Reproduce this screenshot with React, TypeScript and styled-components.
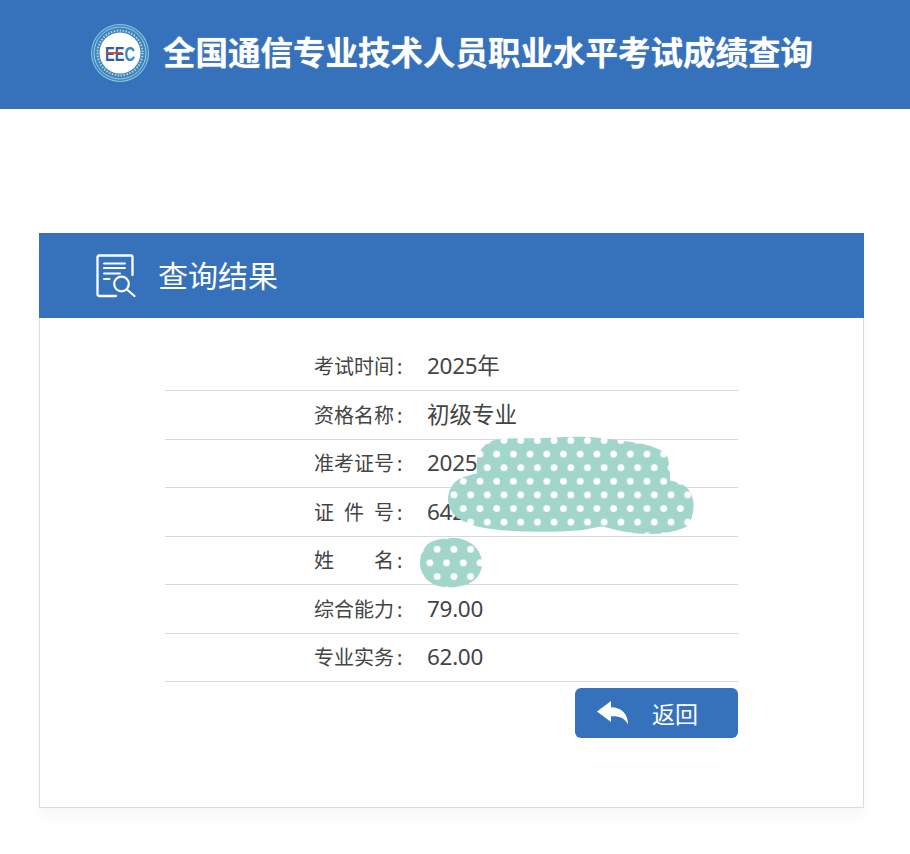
import React from "react";
import styled, { createGlobalStyle } from "styled-components";

const BLUE = "#3672bc";
const FONT = `"Noto Sans", "Noto Sans CJK SC", sans-serif`;

const Global = createGlobalStyle`
  html, body { margin: 0; padding: 0; background: #fff; }
  body { font-family: ${FONT}; color: #444; }
`;

const Page = styled.div`
  position: relative;
  width: 910px;
  height: 854px;
  overflow: hidden;
`;

const TopBar = styled.header`
  height: 109px;
  background: ${BLUE};
  display: flex;
  align-items: center;
  padding-left: 91px;
  gap: 14px;
  box-sizing: border-box;
  padding-bottom: 3px;
`;

const SiteTitle = styled.h1`
  margin: 0;
  font-size: 32.5px;
  line-height: 44px;
  font-weight: 700;
  color: #fff;
  white-space: nowrap;
  text-shadow: 0 0 1px rgba(255, 255, 255, 0.7);
`;

const Card = styled.section`
  width: 825px;
  height: 575px;
  margin: 124px 0 0 39px;
  box-sizing: border-box;
  background: #fff;
  border: 1px solid #dcdcdc;
  border-top: 0;
  box-shadow: 0 10px 12px rgba(0, 0, 0, 0.03);
`;

const CardHead = styled.div`
  height: 85px;
  margin: 0 -1px;
  background: ${BLUE};
  display: flex;
  align-items: center;
  padding-left: 57px;
  gap: 22px;
  color: #fff;
`;

const CardTitle = styled.h2`
  margin: 0;
  font-size: 30px;
  line-height: 40px;
  font-weight: 400;
`;

const Rows = styled.div`
  width: 573px;
  margin: 24.5px 0 0 125px;
`;

const Row = styled.div`
  height: 48.5px;
  box-sizing: border-box;
  border-bottom: 1px solid #d9d9d9;
  display: flex;
  align-items: center;
  padding-left: 149px;
`;

const Label = styled.span<{ $gap?: number }>`
  width: 113px;
  flex: none;
  padding-top: 2px;
  box-sizing: border-box;
  font-size: 20px;
  line-height: 46px;
  white-space: pre;
  color: #444;
  word-spacing: ${(p) => p.$gap ?? 0}px;
`;

const Colon = styled.span`
  margin-left: 3px;
`;

const Value = styled.span`
  font-size: 22.5px;
  line-height: 48px;
  color: #444;
  white-space: nowrap;
`;

const Digits = styled.span`
  letter-spacing: -0.3px;
`;

const Actions = styled.div`
  display: flex;
  justify-content: flex-end;
  margin-top: 6px;
`;

const BackButton = styled.button`
  width: 163px;
  height: 50px;
  border: 0;
  border-radius: 6px;
  background: ${BLUE};
  color: #fff;
  font-family: ${FONT};
  font-size: 23px;
  display: flex;
  align-items: center;
  padding: 0 0 0 22px;
  gap: 24px;
`;

const Scribble = styled.svg`
  position: absolute;
  left: 0;
  top: 0;
  pointer-events: none;
`;

const Logo = () => (
  <svg width="58" height="58" viewBox="0 0 58 58">
    <defs>
      <linearGradient id="eecFill" gradientUnits="userSpaceOnUse" x1="14" y1="0" x2="44" y2="0">
        <stop offset="0.62" stopColor="#2e5f9e" />
        <stop offset="0.68" stopColor="#2f8bb8" />
      </linearGradient>
    </defs>
    <circle cx="29" cy="29" r="29" fill="#8fc6dc" />
    <circle cx="29" cy="29" r="28" fill="#3f84bc" />
    <circle cx="29" cy="29" r="26" fill="none" stroke="#9ccfe0" strokeWidth="1" />
    <circle cx="29" cy="29" r="22.5" fill="none" stroke="#a9d6e4" strokeWidth="2" strokeDasharray="1.5 1.5" />
    <circle cx="29" cy="29" r="20.5" fill="#fff" />
    <text
      x="14"
      y="36.700"
      textLength="30"
      lengthAdjust="spacingAndGlyphs"
      fontFamily="'Liberation Sans', sans-serif"
      fontWeight="700"
      fontSize="21"
      fill="url(#eecFill)"
    >
      EEC
    </text>
    <rect x="16" y="28" width="15" height="1.800" fill="#d9443f" />
  </svg>
);

const ResultIcon = () => (
  <svg width="40" height="44" viewBox="0 0 40 44" fill="none" stroke="#fff" strokeLinecap="round" strokeLinejoin="round">
    <path d="M20 42H3a1.500 1.500 0 0 1-1.500-1.500V3A1.500 1.500 0 0 1 3 1.500H35A1.500 1.500 0 0 1 36.500 3V21" strokeWidth="2.300" />
    <path d="M8 9.500H29M8 14H29M8 19.500H24M8 25H13.500" strokeWidth="2" />
    <circle cx="25.500" cy="30" r="7.300" strokeWidth="2.200" />
    <path d="M31 35.500L38.500 42" strokeWidth="2.200" />
  </svg>
);

const ReplyIcon = () => (
  <svg width="31" height="24" viewBox="0 0 31 24" fill="#fff">
    <path d="M0 10.500L14 0V6.300C24 6.300 31 12.500 31 23.500C28 17 22.500 15 14 15.300V21Z" />
  </svg>
);

const rows: { label: string; gap?: number; value: string; unit?: string }[] = [
  { label: "考试时间", value: "2025", unit: "年" },
  { label: "资格名称", value: "初级专业" },
  { label: "准考证号", value: "2025" },
  { label: "证 件 号", gap: 4.8, value: "642" },
  { label: "姓 名", gap: 34.8, value: "" },
  { label: "综合能力", value: "79.00" },
  { label: "专业实务", value: "62.00" },
];

export default function App() {
  return (
    <Page>
      <Global />
      <TopBar>
        <Logo />
        <SiteTitle>全国通信专业技术人员职业水平考试成绩查询</SiteTitle>
      </TopBar>
      <Card>
        <CardHead>
          <ResultIcon />
          <CardTitle>查询结果</CardTitle>
        </CardHead>
        <Rows>
          {rows.map((r) => (
            <Row key={r.label}>
              <Label $gap={r.gap}>
                {r.label}
                <Colon>:</Colon>
              </Label>
              <Value>
                {/^[\d.]+$/.test(r.value) ? <Digits>{r.value}</Digits> : r.value}
                {r.unit}
              </Value>
            </Row>
          ))}
          <Actions>
            <BackButton type="button">
              <ReplyIcon />
              返回
            </BackButton>
          </Actions>
        </Rows>
      </Card>
      <Scribble width="910" height="854" viewBox="0 0 910 854">
        <defs>
          <pattern id="dots" patternUnits="userSpaceOnUse" x="487.3" y="440" width="33.4" height="27.2">
            <rect width="33.4" height="27.2" fill="#a3d6cb" />
            <circle cx="0" cy="0.500" r="3.400" fill="#fff" />
            <circle cx="16.700" cy="0.500" r="3.400" fill="#fff" />
            <circle cx="33.400" cy="0.500" r="3.400" fill="#fff" />
            <circle cx="9.400" cy="14.100" r="3.400" fill="#fff" />
            <circle cx="26.100" cy="14.100" r="3.400" fill="#fff" />
            <circle cx="0" cy="27.700" r="3.400" fill="#fff" />
            <circle cx="16.700" cy="27.700" r="3.400" fill="#fff" />
            <circle cx="33.400" cy="27.700" r="3.400" fill="#fff" />
          </pattern>
        </defs>
        <path
          fill="url(#dots)"
          d="M476.700 463C477 452 484 442 497 439.500C512 437.500 530 438.500 543 438C556 437.500 566 436.500 577 436.700C592 436.800 604 438 617 440C632 442 648 444 657 448.500C665 452 668 456 668.500 461C669.500 468 670.500 474 670 480.500C677 482 684 484 688 489C692 494 694 500 693.500 507C693 515 691 523 686 527C675 532 658 535 643 534C628 533 615 530 603 526.500C595 527 587 530 577 530.500C560 532 543 532 527 531.500C510 531 492 530 477 526.500C468 523 458 520 453 513.500C449 507 447 501 448.500 495C450 488 454 481 460 478.500C466 476 472 474.500 477 473.500Z"
        />
        <path
          fill="url(#dots)"
          d="M420 563C420 553 425 544 433 541C442 538 455 537 463 539.500C474 543 481 551 482 562C482.500 572 477 580 468 584C458 587.500 445 589 435 585C426 581 420 573 420 563Z"
        />
      </Scribble>
    </Page>
  );
}
